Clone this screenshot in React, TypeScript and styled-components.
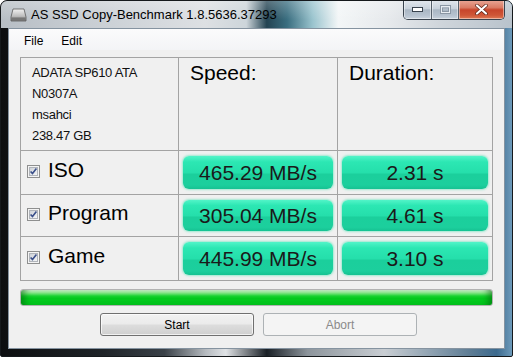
import {Fragment} from "react";
import styled, {createGlobalStyle} from "styled-components";

const GlobalStyle = createGlobalStyle`
  body {
    margin: 0;
    background: #fff;
    font-family: "Liberation Sans", Arial, sans-serif;
  }
  * {
    box-sizing: border-box;
  }
`;

const Window = styled.div`
  width: 513px;
  height: 357px;
  border: 1px solid #15191c;
  border-radius: 7px 7px 2px 2px;
  overflow: hidden;
  display: flex;
  flex-direction: column;
  background: linear-gradient(90deg, #0c0e10 0%, #1f2428 20%, #3a4148 32%, #b5babf 40%, #e0e3e6 44%, #1a2026 52%, #8d959c 60%, #c9ced3 75%, #5d7c94 92%, #3c6a8e 97%, #6d9aba 100%);
`;

const TitleBar = styled.div`
  height: 27px;
  display: flex;
  align-items: flex-start;
  background: linear-gradient(180deg, rgba(255, 255, 255, 0.25), rgba(255, 255, 255, 0) 70%),
  linear-gradient(90deg, #b7bec5 0%, #cdd2d7 22%, #dde0e3 40%, #cdd5da 48%, #234352 52%, #3a6e80 56%, #9ac4ce 61%, #f3f6f7 66%, #e6e9ec 76%, #cfd5db 86%, #b9c3cc 100%);
`;

const TitleIcon = styled.div`
  margin: 7px 0 0 9px;
  width: 17px;
  height: 14px;
  display: flex;
`;

const TitleText = styled.div`
  margin: 6px 0 0 4px;
  font-size: 13px;
  line-height: 16px;
  color: #000;
  white-space: nowrap;
`;

const Controls = styled.div`
  margin: -1px 7px 0 auto;
  display: flex;
  height: 20px;
  border: 1px solid #39434e;
  border-top: none;
  border-radius: 0 0 5px 5px;
  overflow: hidden;
`;

const CtrlBtn = styled.div<{ $w: number; $close?: boolean }>`
  width: ${p => p.$w}px;
  display: flex;
  align-items: center;
  justify-content: center;
  & + & {
    border-left: 1px solid #56616c;
  }
  box-shadow: inset 0 0 0 1px rgba(255, 255, 255, 0.45);
  background: ${p => p.$close
    ? "linear-gradient(180deg, #e9a797 0%, #d97b64 40%, #c8452b 52%, #cf5637 80%, #e07a55 100%)"
    : "linear-gradient(180deg, #e3e8ee 0%, #c9d2dc 45%, #aab7c4 52%, #b6c2cf 80%, #c9d3dd 100%)"};
`;

const Client = styled.div`
  flex: 1;
  margin: 0 7px 7px 7px;
  border: 1px solid #8593a0;
  background: #f0f0f0;
  display: flex;
  flex-direction: column;
`;

const MenuBar = styled.div`
  height: 21px;
  display: flex;
  align-items: center;
  padding: 3px 0 0 6px;
  background: linear-gradient(180deg, #fbfbfc 0%, #f3f4f6 100%);
  font-size: 12px;
  color: #000;
`;

const MenuItem = styled.span`
  padding: 0 9px;
`;

const Body = styled.div`
  flex: 1;
  padding: 7px 11px 0 11px;
  display: flex;
  flex-direction: column;
`;

const Table = styled.div`
  display: grid;
  grid-template-columns: 157px 158px 154px;
  grid-template-rows: 92px 43px 41px 43px;
  gap: 1px;
  padding: 1px;
  background: #a3a3a3;
`;

const Cell = styled.div`
  background: #f0f0f0;
  display: flex;
  align-items: stretch;
  padding: 5px 4px;
`;

const InfoCell = styled.div`
  background: #f0f0f0;
  padding: 4px 11px;
  font-size: 13px;
  line-height: 21px;
  letter-spacing: -0.3px;
  color: #111;
`;

const HeadCell = styled.div`
  background: #f0f0f0;
  padding: 3px 11px;
  font-size: 21px;
  line-height: 24px;
  color: #000;
`;

const LabelCell = styled.div`
  background: #f0f0f0;
  display: flex;
  align-items: center;
  gap: 8px;
  padding: 0 0 5px 6px;
  font-size: 21px;
  color: #000;
`;

const CheckBox = styled.span`
  width: 13px;
  height: 13px;
  display: flex;
  margin-top: 2px;
`;

const ValueBox = styled.div`
  flex: 1;
  display: flex;
  align-items: center;
  justify-content: center;
  border-radius: 6px;
  font-size: 21px;
  color: #1a1a1a;
  background: linear-gradient(180deg, #52f4c8 0%, #2ce7b3 18%, #25dfab 50%, #1bcf9c 56%, #1ccf9d 88%, #16c292 100%);
  box-shadow: 0 0 2px 1px rgba(60, 225, 170, 0.45);
`;

const Progress = styled.div`
  margin-top: 8px;
  height: 17px;
  border: 1px solid #b2b2b2;
  border-radius: 3px;
  background: linear-gradient(180deg, #d4f5d4 0%, #8de88e 18%, #19d230 40%, #03c91c 55%, #03c81f 100%);
  box-shadow: inset 8px 0 6px -4px rgba(0, 90, 10, 0.5), inset -8px 0 6px -4px rgba(0, 90, 10, 0.5);
`;

const ButtonRow = styled.div`
  margin-top: 7px;
  display: flex;
  justify-content: center;
  gap: 9px;
  padding-left: 4px;
`;

const Button = styled.button<{ $disabled?: boolean }>`
  width: 154px;
  height: 23px;
  padding: 0;
  font-family: "Liberation Sans", Arial, sans-serif;
  font-size: 12px;
  border-radius: 3px;
  color: ${p => (p.$disabled ? "#8a8a8a" : "#000")};
  border: 1px solid ${p => (p.$disabled ? "#adb2b5" : "#707070")};
  background: ${p => p.$disabled
    ? "#f4f4f4"
    : "linear-gradient(180deg, #f2f2f2 0%, #ebebeb 48%, #dddddd 52%, #cfcfcf 100%)"};
  box-shadow: ${p => (p.$disabled ? "none" : "inset 0 0 0 1px rgba(255,255,255,0.7)")};
`;

const Check = () => (
    <svg width="13" height="13" viewBox="0 0 13 13">
        <rect x="0.5" y="0.5" width="12" height="12" fill="#f4f4f4" stroke="#8e8f8f"/>
        <defs>
            <linearGradient id="cbg" x1="0" y1="0" x2="1" y2="1">
                <stop offset="0" stopColor="#cbcfd5"/>
                <stop offset="1" stopColor="#f7f8f9"/>
            </linearGradient>
        </defs>
        <rect x="2.5" y="2.5" width="8" height="8" fill="url(#cbg)" stroke="#b0b4ba"/>
        <path d="M3.6 6.4 L5.5 8.6 L9.4 3.6" fill="none" stroke="#3a4f8a" strokeWidth="1.6"/>
    </svg>
);

const DriveIcon = () => (
    <svg width="17" height="14" viewBox="0 0 17 14">
        <defs>
            <linearGradient id="drv" x1="0" y1="0" x2="0" y2="1">
                <stop offset="0" stopColor="#f2f2f2"/>
                <stop offset="0.6" stopColor="#bdbdbd"/>
                <stop offset="1" stopColor="#6f6f6f"/>
            </linearGradient>
        </defs>
        <path d="M3 1 H14 L16 9 V13 H1 V9 Z" fill="url(#drv)" stroke="#5b5b5b" strokeWidth="0.8"/>
        <rect x="1.5" y="9.5" width="14" height="3" fill="#777"/>
    </svg>
);

const rows = [
    {name: "ISO", speed: "465.29 MB/s", time: "2.31 s"},
    {name: "Program", speed: "305.04 MB/s", time: "4.61 s"},
    {name: "Game", speed: "445.99 MB/s", time: "3.10 s"},
];

function App() {
    return (
        <>
            <GlobalStyle/>
            <Window>
                <TitleBar>
                    <TitleIcon><DriveIcon/></TitleIcon>
                    <TitleText>AS SSD Copy-Benchmark 1.8.5636.37293</TitleText>
                    <Controls>
                        <CtrlBtn $w={27}>
                            <svg width="11" height="5" viewBox="0 0 11 5">
                                <rect x="0.5" y="0.5" width="10" height="4" fill="#fff" stroke="#39434e"/>
                            </svg>
                        </CtrlBtn>
                        <CtrlBtn $w={27}>
                            <svg width="11" height="9" viewBox="0 0 11 9">
                                <rect x="0.5" y="0.5" width="10" height="8" fill="none" stroke="#8c98a5"/>
                                <rect x="1.5" y="1.5" width="8" height="6" fill="none" stroke="#e8edf2"/>
                                <rect x="2.5" y="3" width="6" height="3.5" fill="none" stroke="#8c98a5"/>
                            </svg>
                        </CtrlBtn>
                        <CtrlBtn $w={46} $close>
                            <svg width="13" height="11" viewBox="0 0 13 11">
                                <path d="M2 1.5 L11 9.5 M11 1.5 L2 9.5" stroke="#5a2418" strokeWidth="3.6" strokeLinecap="round"/>
                                <path d="M2 1.5 L11 9.5 M11 1.5 L2 9.5" stroke="#fff" strokeWidth="2.2" strokeLinecap="round"/>
                            </svg>
                        </CtrlBtn>
                    </Controls>
                </TitleBar>
                <Client>
                    <MenuBar>
                        <MenuItem>File</MenuItem>
                        <MenuItem>Edit</MenuItem>
                    </MenuBar>
                    <Body>
                        <Table>
                            <InfoCell>
                                ADATA SP610 ATA<br/>
                                N0307A<br/>
                                msahci<br/>
                                238.47 GB
                            </InfoCell>
                            <HeadCell>Speed:</HeadCell>
                            <HeadCell>Duration:</HeadCell>
                            {rows.map(r => (
                                <Fragment key={r.name}>
                                    <LabelCell>
                                        <CheckBox><Check/></CheckBox>
                                        {r.name}
                                    </LabelCell>
                                    <Cell><ValueBox>{r.speed}</ValueBox></Cell>
                                    <Cell><ValueBox>{r.time}</ValueBox></Cell>
                                </Fragment>
                            ))}
                        </Table>
                        <Progress/>
                        <ButtonRow>
                            <Button>Start</Button>
                            <Button $disabled disabled>Abort</Button>
                        </ButtonRow>
                    </Body>
                </Client>
            </Window>
        </>
    );
}

export default App;
